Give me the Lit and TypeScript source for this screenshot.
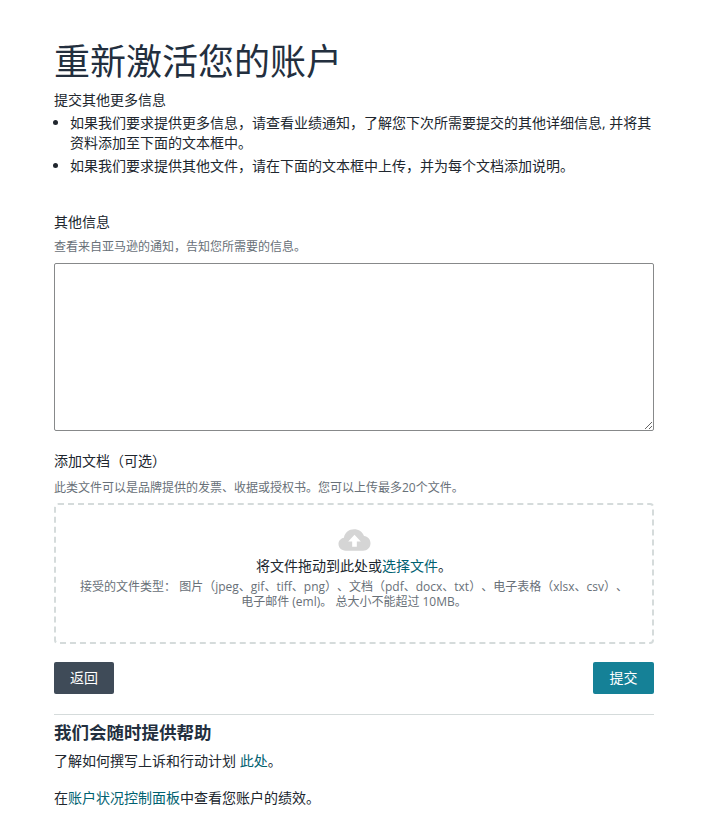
import { LitElement, html, css } from "lit";
import { customElement } from "lit/decorators.js";

@customElement("app-root")
export class AppRoot extends LitElement {
  static styles = css`
    :host {
      display: block;
      box-sizing: border-box;
      width: 702px;
      padding: 38px 48px 0 54px;
      background: #fff;
      color: #20262e;
      font-family: "Open Sans", "Noto Sans CJK SC", sans-serif;
      font-size: 14px;
      line-height: 20px;
      text-spacing-trim: space-all;
    }
    * { box-sizing: border-box; }
    h1 {
      margin: 0;
      font-size: 36px;
      line-height: 48px;
      font-weight: 400;
      color: #232f3e;
    }
    .intro { margin: 4px 0 0; }
    ul { margin: 0; padding: 0 0 0 16px; }
    li { padding-top: 3px; line-height: 20px; }
    li + li { margin-top: 0; }
    .label { margin: 0; }
    .first { margin-top: 36px; }
    .hint { margin: 6px 0 0; font-size: 12px; line-height: 18px; color: #687078; }
    textarea {
      display: block;
      width: 600px;
      height: 168px;
      margin: 7px 0 0;
      border: 1px solid #87898a;
      border-radius: 2px;
      background: #fff;
      outline: none;
    }
    .second { margin-top: 20px; }
    .second + .hint { margin-top: 8px; }
    .drop {
      display: flex;
      flex-direction: column;
      align-items: center;
      height: 141px;
      margin-top: 6px;
      padding: 23px 20px 0;
      border: 2px dashed #d5dbdb;
      border-radius: 4px;
      text-align: center;
    }
    .drop svg { display: block; width: 33px; height: 24px; }
    .drop-main { margin-top: 4px; line-height: 20px; }
    .drop-types { margin-top: 3px; font-size: 12px; line-height: 15px; color: #687078; }
    a { color: #006170; text-decoration: none; }
    .actions { display: flex; justify-content: space-between; margin-top: 18px; }
    button {
      width: 60px;
      height: 32px;
      padding: 0;
      border: 0;
      border-radius: 2px;
      color: #fff;
      font: inherit;
    }
    .back { background: #3f4b58; }
    .submit { width: 61px; background: #158197; }
    .help { margin-top: 20px; padding-top: 6px; border-top: 1px solid #d5dbdb; }
    h2 { margin: 0; font-size: 17.5px; line-height: 22px; font-weight: 700; color: #232f3e; }
    .help p { margin: 8px 0 0; }
    .help p + p { margin-top: 17px; }
  `;

  render() {
    return html`
      <h1>重新激活您的账户</h1>
      <p class="intro">提交其他更多信息</p>
      <ul>
        <li>如果我们要求提供更多信息，请查看业绩通知，了解您下次所需要提交的其他详细信息, 并将其资料添加至下面的文本框中。</li>
        <li>如果我们要求提供其他文件，请在下面的文本框中上传，并为每个文档添加说明。</li>
      </ul>
      <p class="label first">其他信息</p>
      <p class="hint">查看来自亚马逊的通知，告知您所需要的信息。</p>
      <textarea></textarea>
      <p class="label second">添加文档（可选）</p>
      <p class="hint">此类文件可以是品牌提供的发票、收据或授权书。您可以上传最多20个文件。</p>
      <div class="drop">
        <svg viewBox="0 0 34 24" aria-hidden="true">
          <path fill="#d5d5d5" fill-rule="evenodd" d="M8 23C3.600 23 .5 20 .5 16.200c0-3.400 2.400-6 5.600-6.600C7 4.400 11.300 1 16.600 1c4.700 0 8.700 2.700 10.200 7 3.900.3 6.700 3.500 6.700 7.300 0 4.300-3.300 7.700-7.700 7.700H8Zm9-16.500-6.500 7h4.100V19h4.800v-5.500h4.100l-6.500-7Z"/>
        </svg>
        <div class="drop-main">将文件拖动到此处或<a href="#">选择文件</a>。</div>
        <div class="drop-types">接受的文件类型： 图片（jpeg、gif、tiff、png）、文档（pdf、docx、txt）、电子表格（xlsx、csv）、电子邮件 (eml)。 总大小不能超过 10MB。</div>
      </div>
      <div class="actions">
        <button class="back">返回</button>
        <button class="submit">提交</button>
      </div>
      <div class="help">
        <h2>我们会随时提供帮助</h2>
        <p>了解如何撰写上诉和行动计划 <a href="#">此处</a>。</p>
        <p>在<a href="#">账户状况控制面板</a>中查看您账户的绩效。</p>
      </div>
    `;
  }
}
